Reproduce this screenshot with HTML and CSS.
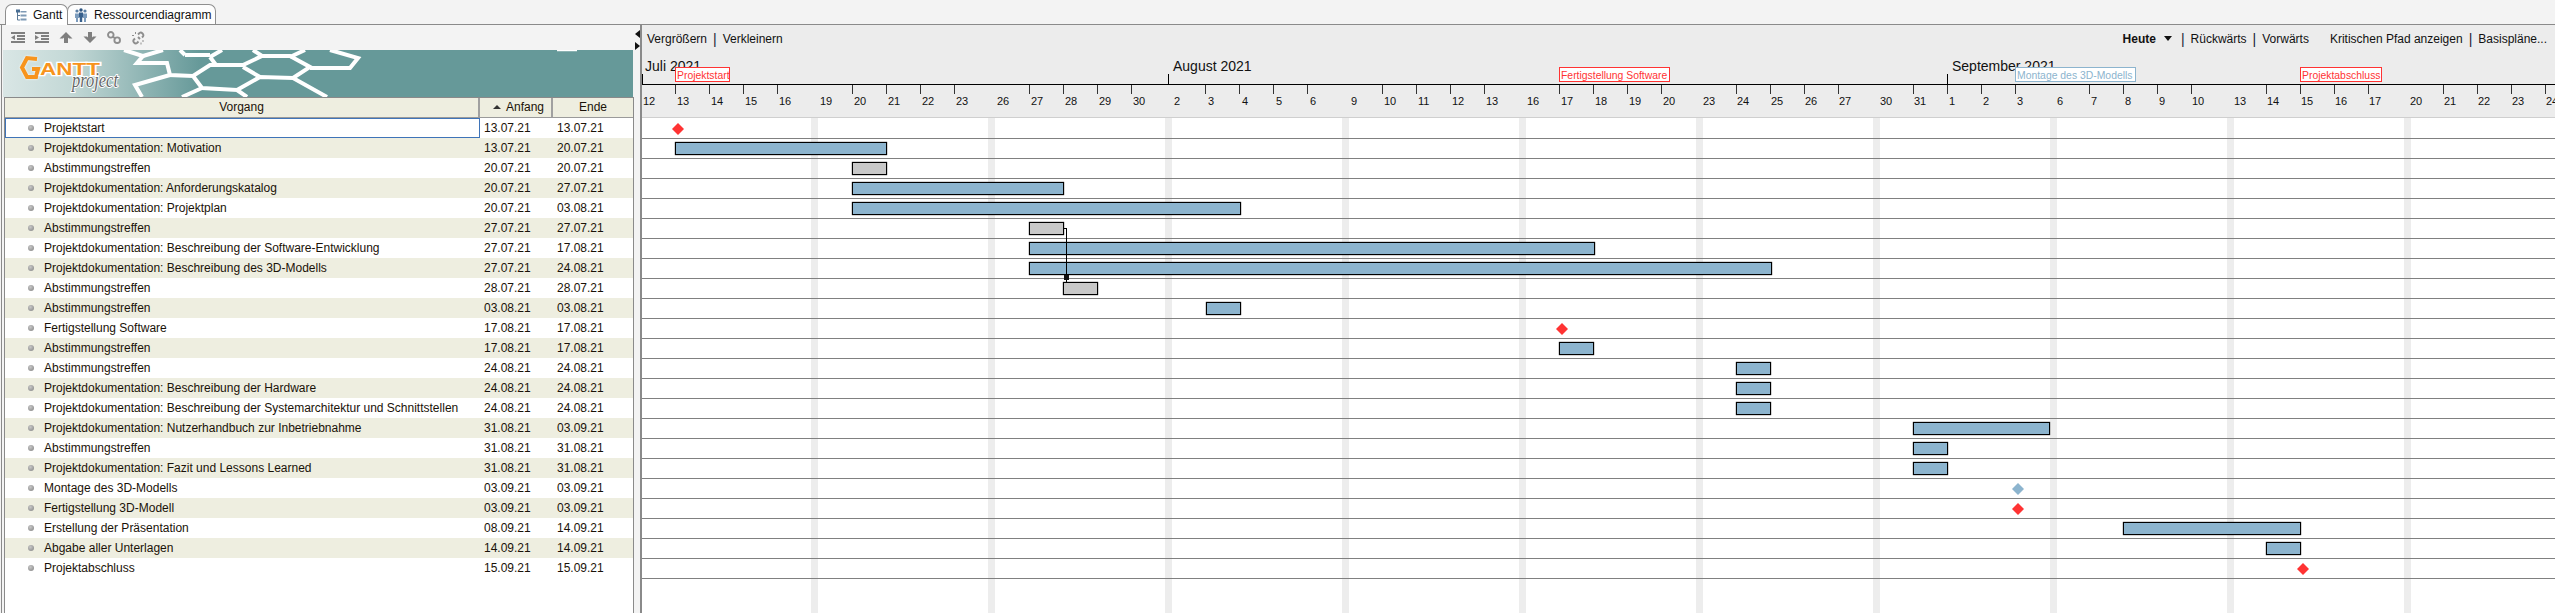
FILE: index.html
```html
<!DOCTYPE html>
<html lang="de">
<head>
    <meta charset="UTF-8">
    <title>GanttProject</title>
    <link rel="stylesheet" href="styles.css">
</head>
<body>
    <div class="tabs">
        <div class="tab tab-gantt">
            <svg class="tab-icon" width="12" height="12" viewBox="0 0 12 12">
                <path d="M2.5 3V11H5M2.5 6.5H5" fill="none" stroke="#5a7896"/>
                <rect x="1" y="0.5" width="4" height="3" fill="#4a6f94"/>
                <rect x="5.5" y="2" width="6" height="1.5" fill="#7f9ab5"/>
                <rect x="5.5" y="5.5" width="6" height="2" fill="#7f9ab5"/>
                <rect x="5.5" y="9.5" width="6" height="2" fill="#7f9ab5"/>
            </svg>
            <span>Gantt</span>
        </div>
        <div class="tab tab-res">
            <svg class="tab-icon" width="14" height="14" viewBox="0 0 14 14">
                <circle cx="3" cy="3" r="1.6" fill="#5a7fa6"/>
                <circle cx="11" cy="3" r="1.6" fill="#5a7fa6"/>
                <circle cx="7" cy="2" r="1.7" fill="#2f5580"/>
                <path d="M1 5.5H5V10H4V14H2V10H1ZM9 5.5H13V10H12V14H10V10H9Z" fill="#7c9cbd"/>
                <path d="M5 4.5H9V9.5H8.2V14H5.8V9.5H5Z" fill="#38608c"/>
            </svg>
            <span>Ressourcendiagramm</span>
        </div>
    </div>

    <div class="main">
        <div class="left-pane">
            <div class="icon-bar">
                <svg width="14" height="11" viewBox="0 0 14 11" class="tool-icon"><path d="M0 0H14V2H0ZM6 3H14V5H6ZM6 6H14V8H6ZM0 9H14V11H0ZM0 5.5L4 3V8Z"/></svg>
                <svg width="14" height="11" viewBox="0 0 14 11" class="tool-icon"><path d="M0 0H14V2H0ZM6 3H14V5H6ZM6 6H14V8H6ZM0 9H14V11H0ZM4 5.5L0 3V8Z"/></svg>
                <svg width="14" height="11" viewBox="0 0 14 11" class="tool-icon"><path d="M7 0L13.5 6.5H10L9 5.5V11H5V5.5L4 6.5H0.5Z"/></svg>
                <svg width="14" height="11" viewBox="0 0 14 11" class="tool-icon"><path d="M7 11L13.5 4.5H10L9 5.5V0H5V5.5L4 4.5H0.5Z"/></svg>
                <svg width="14" height="13" viewBox="0 0 14 13" class="tool-icon link-icon"><circle cx="3.8" cy="3.8" r="2.8"/><circle cx="10.2" cy="9.2" r="2.8"/><path d="M5.5 5.5L8.5 7.5"/></svg>
                <svg width="15" height="14" viewBox="0 0 15 14" class="tool-icon link-icon"><path d="M7 3.5L8.5 2Q10 1 11.5 2.5T12 5.5L11 6.5M4 7.5L3 8.5Q1.5 10 3 11.5T6 12L7.5 10.5M7 6L9 8"/><path class="link-spark" d="M4.5 1V3M1 4.5H3M11 10H13M10 11.5V13.5"/></svg>
            </div>

            <div class="banner">
                <svg width="630" height="47" viewBox="3 50 630 47">
                    <defs>
                        <linearGradient id="bannerFade" x1="3" y1="0" x2="200" y2="0" gradientUnits="userSpaceOnUse">
                            <stop offset="0" stop-color="#d9e6e5"/>
                            <stop offset="0.35" stop-color="#c3d8d6"/>
                            <stop offset="1" stop-color="#669999"/>
                        </linearGradient>
                    </defs>
                    <rect x="3" y="50" width="630" height="47" fill="url(#bannerFade)"/>
                    <g class="hex-lines">
                        <path d="M124 50L143 56L137 63H167L170 75L193 76L210 65H243L262 56H290L310 67L293 78L260 77L237 90L202 88L193 76"/>
                        <path d="M243 67L260 77M210 57L216 65M210 57L222 50M185 55H210M185 55L180 50M143 56L163 50M262 56L253 50M290 57L305 50"/>
                        <path d="M170 75L135 85L142 97M202 88L182 97M237 90L247 97M293 78L327 97"/>
                        <path d="M330 50L358 58L350 68H310"/>
                        <path class="hex-thin" d="M557 50.5H577"/>
                    </g>
                    <polyline class="logo-ring" points="37,59 27,58 22,67.5 27,77 36,77 38,69 32,69"/>
                    <text class="logo-word" x="40" y="75" textLength="60" lengthAdjust="spacingAndGlyphs">ANTT</text>
                    <text class="logo-sub" x="72" y="87" textLength="46" lengthAdjust="spacingAndGlyphs">project</text>
                </svg>
            </div>

            <div class="task-table">
                <div class="task-row task-head">
                    <div class="head-cell head-name">Vorgang</div>
                    <div class="head-cell head-date"><span class="sort-up"></span>Anfang</div>
                    <div class="head-cell">Ende</div>
                </div>
                <div class="task-row selected"><div class="name">Projektstart</div><div>13.07.21</div><div>13.07.21</div></div>
                <div class="task-row"><div class="name">Projektdokumentation: Motivation</div><div>13.07.21</div><div>20.07.21</div></div>
                <div class="task-row"><div class="name">Abstimmungstreffen</div><div>20.07.21</div><div>20.07.21</div></div>
                <div class="task-row"><div class="name">Projektdokumentation: Anforderungskatalog</div><div>20.07.21</div><div>27.07.21</div></div>
                <div class="task-row"><div class="name">Projektdokumentation: Projektplan</div><div>20.07.21</div><div>03.08.21</div></div>
                <div class="task-row"><div class="name">Abstimmungstreffen</div><div>27.07.21</div><div>27.07.21</div></div>
                <div class="task-row"><div class="name">Projektdokumentation: Beschreibung der Software-Entwicklung</div><div>27.07.21</div><div>17.08.21</div></div>
                <div class="task-row"><div class="name">Projektdokumentation: Beschreibung des 3D-Modells</div><div>27.07.21</div><div>24.08.21</div></div>
                <div class="task-row"><div class="name">Abstimmungstreffen</div><div>28.07.21</div><div>28.07.21</div></div>
                <div class="task-row"><div class="name">Abstimmungstreffen</div><div>03.08.21</div><div>03.08.21</div></div>
                <div class="task-row"><div class="name">Fertigstellung Software</div><div>17.08.21</div><div>17.08.21</div></div>
                <div class="task-row"><div class="name">Abstimmungstreffen</div><div>17.08.21</div><div>17.08.21</div></div>
                <div class="task-row"><div class="name">Abstimmungstreffen</div><div>24.08.21</div><div>24.08.21</div></div>
                <div class="task-row"><div class="name">Projektdokumentation: Beschreibung der Hardware</div><div>24.08.21</div><div>24.08.21</div></div>
                <div class="task-row"><div class="name">Projektdokumentation: Beschreibung der Systemarchitektur und Schnittstellen</div><div>24.08.21</div><div>24.08.21</div></div>
                <div class="task-row"><div class="name">Projektdokumentation: Nutzerhandbuch zur Inbetriebnahme</div><div>31.08.21</div><div>03.09.21</div></div>
                <div class="task-row"><div class="name">Abstimmungstreffen</div><div>31.08.21</div><div>31.08.21</div></div>
                <div class="task-row"><div class="name">Projektdokumentation: Fazit und Lessons Learned</div><div>31.08.21</div><div>31.08.21</div></div>
                <div class="task-row"><div class="name">Montage des 3D-Modells</div><div>03.09.21</div><div>03.09.21</div></div>
                <div class="task-row"><div class="name">Fertigstellung 3D-Modell</div><div>03.09.21</div><div>03.09.21</div></div>
                <div class="task-row"><div class="name">Erstellung der Präsentation</div><div>08.09.21</div><div>14.09.21</div></div>
                <div class="task-row"><div class="name">Abgabe aller Unterlagen</div><div>14.09.21</div><div>14.09.21</div></div>
                <div class="task-row"><div class="name">Projektabschluss</div><div>15.09.21</div><div>15.09.21</div></div>
            </div>
        </div>

        <div class="splitter">
            <span class="arrow-left"></span>
            <span class="arrow-right"></span>
        </div>

        <div class="right-pane">
            <div class="chart-head">
                <div class="chart-tools">
                    <div class="tool-group">
                        <span>Vergrößern</span><span class="sep">|</span><span>Verkleinern</span>
                    </div>
                    <div class="tool-group">
                        <b>Heute</b><span class="drop"></span><span class="sep">|</span><span>Rückwärts</span><span class="sep">|</span><span>Vorwärts</span>
                        <span class="tool-gap">Kritischen Pfad anzeigen</span><span class="sep">|</span><span>Basispläne...</span>
                    </div>
                </div>
                <svg class="timeline" width="1913" height="67" viewBox="642 50 1913 67">
                    <path class="axis" d="M642 84.5H2555M642.5 74V84M1168.5 74V84M1947.5 74V84"/>
                    <path class="tick" d="M675.5 85V94M709.5 85V94M743.5 85V94M777.5 85V94M852.5 85V94M886.5 85V94M920.5 85V94M954.5 85V94M1029.5 85V94M1063.5 85V94M1097.5 85V94M1131.5 85V94M1205.5 85V94M1239.5 85V94M1273.5 85V94M1307.5 85V94M1382.5 85V94M1416.5 85V94M1450.5 85V94M1484.5 85V94M1559.5 85V94M1593.5 85V94M1627.5 85V94M1661.5 85V94M1736.5 85V94M1770.5 85V94M1804.5 85V94M1838.5 85V94M1913.5 85V94M1947.5 85V94M1981.5 85V94M2015.5 85V94M2089.5 85V94M2123.5 85V94M2157.5 85V94M2191.5 85V94M2266.5 85V94M2300.5 85V94M2334.5 85V94M2368.5 85V94M2443.5 85V94M2477.5 85V94M2511.5 85V94M2545.5 85V94"/>

                    <text class="month" x="645" y="70.5">Juli 2021</text>
                    <text class="month" x="1173" y="70.5">August 2021</text>
                    <text class="month" x="1952" y="70.5">September 2021</text>

                    <text class="day" x="643" y="104.5">12</text><text class="day" x="677" y="104.5">13</text><text class="day" x="711" y="104.5">14</text><text class="day" x="745" y="104.5">15</text><text class="day" x="779" y="104.5">16</text>
                    <text class="day" x="820" y="104.5">19</text><text class="day" x="854" y="104.5">20</text><text class="day" x="888" y="104.5">21</text><text class="day" x="922" y="104.5">22</text><text class="day" x="956" y="104.5">23</text>
                    <text class="day" x="997" y="104.5">26</text><text class="day" x="1031" y="104.5">27</text><text class="day" x="1065" y="104.5">28</text><text class="day" x="1099" y="104.5">29</text><text class="day" x="1133" y="104.5">30</text>
                    <text class="day" x="1174" y="104.5">2</text><text class="day" x="1208" y="104.5">3</text><text class="day" x="1242" y="104.5">4</text><text class="day" x="1276" y="104.5">5</text><text class="day" x="1310" y="104.5">6</text>
                    <text class="day" x="1351" y="104.5">9</text><text class="day" x="1384" y="104.5">10</text><text class="day" x="1418" y="104.5">11</text><text class="day" x="1452" y="104.5">12</text><text class="day" x="1486" y="104.5">13</text>
                    <text class="day" x="1527" y="104.5">16</text><text class="day" x="1561" y="104.5">17</text><text class="day" x="1595" y="104.5">18</text><text class="day" x="1629" y="104.5">19</text><text class="day" x="1663" y="104.5">20</text>
                    <text class="day" x="1703" y="104.5">23</text><text class="day" x="1737" y="104.5">24</text><text class="day" x="1771" y="104.5">25</text><text class="day" x="1805" y="104.5">26</text><text class="day" x="1839" y="104.5">27</text>
                    <text class="day" x="1880" y="104.5">30</text><text class="day" x="1914" y="104.5">31</text><text class="day" x="1949" y="104.5">1</text><text class="day" x="1983" y="104.5">2</text><text class="day" x="2017" y="104.5">3</text>
                    <text class="day" x="2057" y="104.5">6</text><text class="day" x="2091" y="104.5">7</text><text class="day" x="2125" y="104.5">8</text><text class="day" x="2159" y="104.5">9</text><text class="day" x="2192" y="104.5">10</text>
                    <text class="day" x="2234" y="104.5">13</text><text class="day" x="2267" y="104.5">14</text><text class="day" x="2301" y="104.5">15</text><text class="day" x="2335" y="104.5">16</text><text class="day" x="2369" y="104.5">17</text>
                    <text class="day" x="2410" y="104.5">20</text><text class="day" x="2444" y="104.5">21</text><text class="day" x="2478" y="104.5">22</text><text class="day" x="2512" y="104.5">23</text><text class="day" x="2546" y="104.5">24</text>

                    <g class="flag-red">
                        <rect x="675.5" y="67.5" width="54" height="14"/><text x="677" y="78.5">Projektstart</text>
                        <rect x="1559.5" y="67.5" width="110" height="14"/><text x="1561" y="78.5">Fertigstellung Software</text>
                        <rect x="2300.5" y="67.5" width="81" height="14"/><text x="2302" y="78.5">Projektabschluss</text>
                    </g>
                    <g class="flag-blue">
                        <rect x="2015.5" y="67.5" width="120" height="14"/><text x="2017" y="78.5">Montage des 3D-Modells</text>
                    </g>
                </svg>
            </div>

            <div class="chart-body">
                <div class="chart-row"><span class="diamond" style="left:30px"></span></div>
                <div class="chart-row"><span class="bar" style="left:33px;width:212px"></span></div>
                <div class="chart-row"><span class="bar bar-meet" style="left:210px;width:35px"></span></div>
                <div class="chart-row"><span class="bar" style="left:210px;width:212px"></span></div>
                <div class="chart-row"><span class="bar" style="left:210px;width:389px"></span></div>
                <div class="chart-row"><span class="bar bar-meet" style="left:387px;width:35px"></span></div>
                <div class="chart-row"><span class="bar" style="left:387px;width:566px"></span></div>
                <div class="chart-row"><span class="bar" style="left:387px;width:743px"></span></div>
                <div class="chart-row"><span class="bar bar-meet" style="left:421px;width:35px"></span></div>
                <div class="chart-row"><span class="bar" style="left:564px;width:35px"></span></div>
                <div class="chart-row"><span class="diamond" style="left:914px"></span></div>
                <div class="chart-row"><span class="bar" style="left:917px;width:35px"></span></div>
                <div class="chart-row"><span class="bar" style="left:1094px;width:35px"></span></div>
                <div class="chart-row"><span class="bar" style="left:1094px;width:35px"></span></div>
                <div class="chart-row"><span class="bar" style="left:1094px;width:35px"></span></div>
                <div class="chart-row"><span class="bar" style="left:1271px;width:137px"></span></div>
                <div class="chart-row"><span class="bar" style="left:1271px;width:35px"></span></div>
                <div class="chart-row"><span class="bar" style="left:1271px;width:35px"></span></div>
                <div class="chart-row"><span class="diamond diamond-blue" style="left:1370px"></span></div>
                <div class="chart-row"><span class="diamond" style="left:1370px"></span></div>
                <div class="chart-row"><span class="bar" style="left:1481px;width:178px"></span></div>
                <div class="chart-row"><span class="bar" style="left:1624px;width:35px"></span></div>
                <div class="chart-row"><span class="diamond" style="left:1655px"></span></div>
                <span class="link-line"></span>
                <span class="link-head"></span>
            </div>
        </div>
    </div>
</body>
</html>
```

FILE: styles.css
```css
* {
    box-sizing: border-box;
}

html, body {
    height: 100%;
}

body {
    margin: 0;
    background-color: #f3f3f3;
    color: #111;
    font-family: "Liberation Sans", Arial, sans-serif;
    font-size: 12px;
    display: flex;
    flex-direction: column;
    overflow: hidden;
}

/* tabs */
.tabs {
    height: 25px;
    display: flex;
    padding: 4px 0 0 5px;
    border-bottom: 1px solid #8a8a8a;
    flex: none;
}
.tab {
    height: 20px;
    display: flex;
    align-items: center;
    gap: 6px;
    background-color: #fff;
    border: 1px solid #8f8f8f;
    border-bottom: none;
    border-radius: 7px 7px 0 0;
}
.tab-gantt {
    width: 63px;
    padding-left: 9px;
    position: relative;
    z-index: 1;
    height: 21px;
}
.tab-res {
    width: 149px;
    margin-left: -1px;
    padding-left: 6px;
    background-color: #fdfdfd;
}
.tab-icon {
    flex: none;
}

.main {
    flex: 1;
    display: flex;
    min-height: 0;
}

/* left side */
.left-pane {
    width: 634px;
    display: flex;
    flex-direction: column;
    border-left: 1px solid #8a8a8a;
    margin-left: 1px;
    padding-left: 1px;
    flex: none;
}
.icon-bar {
    height: 25px;
    display: flex;
    align-items: center;
    gap: 10px;
    padding-left: 8px;
    flex: none;
}
.tool-icon {
    fill: #7f7f7f;
    flex: none;
}
.link-icon {
    fill: none;
    stroke: #8e8e8e;
    stroke-width: 1.9;
}
.link-spark {
    stroke-width: 1;
}
.banner {
    height: 47px;
    line-height: 0;
    flex: none;
}
.hex-lines path {
    fill: none;
    stroke: #fff;
    stroke-width: 4;
}
.hex-lines .hex-thin {
    stroke-width: 1.5;
}
.logo-ring {
    fill: none;
    stroke: #f7941d;
    stroke-width: 4;
    filter: drop-shadow(0 0 1px #fff);
}
.logo-word {
    font-family: "Liberation Sans", sans-serif;
    font-weight: bold;
    font-size: 17px;
    fill: #f7941d;
    stroke: #fff;
    stroke-width: 2.5px;
    paint-order: stroke;
}
.logo-sub {
    font-family: "Liberation Serif", serif;
    font-style: italic;
    font-size: 20px;
    fill: #666;
    stroke: #fff;
    stroke-width: 2px;
    paint-order: stroke;
}

.task-table {
    flex: 1;
    width: 630px;
    margin-left: 1px;
    background-color: #fff;
    border-left: 1px solid #8a8a8a;
    border-right: 1px solid #8a8a8a;
}
.task-row {
    height: 20px;
    display: grid;
    grid-template-columns: 475px 73px 1fr;
    align-items: center;
    line-height: 20px;
    color: #1a1208;
}
.task-row > div {
    padding-left: 4px;
}
.task-row:nth-child(odd) {
    background-color: #eeeee0;
}
.task-row .name {
    padding-left: 39px;
    position: relative;
}
.task-row .name::before {
    content: "";
    position: absolute;
    left: 23px;
    top: 7px;
    width: 6px;
    height: 6px;
    border-radius: 50%;
    background: radial-gradient(circle at 40% 35%, #c8c8c8, #808080);
}
.task-row.selected .name {
    outline: 1px solid #3f74b8;
    outline-offset: -1px;
}
.task-head {
    height: 21px;
    background-color: #f3f3f3;
    border-top: 1px solid #8a8a8a;
    border-bottom: 1px solid #9a9a9a;
}
.task-table .head-cell {
    height: 19px;
    padding: 0;
    text-align: center;
    line-height: 19px;
    border-right: 2px solid #a0a0a0;
    position: relative;
}
.task-table .head-cell:last-child {
    border-right: none;
}
.task-table .head-date {
    padding-left: 26px;
    text-align: left;
}
.sort-up {
    position: absolute;
    left: 13px;
    top: 7px;
    border-left: 4px solid transparent;
    border-right: 4px solid transparent;
    border-bottom: 4px solid #333;
}

/* splitter */
.splitter {
    width: 5px;
    flex: none;
    display: flex;
    flex-direction: column;
    gap: 4px;
    padding-top: 5px;
}
.arrow-left, .arrow-right {
    width: 0;
    height: 0;
    border-top: 4px solid transparent;
    border-bottom: 4px solid transparent;
}
.arrow-left {
    border-right: 5px solid #111;
}
.arrow-right {
    border-left: 5px solid #111;
}

/* chart side */
.right-pane {
    flex: 1;
    min-width: 0;
    display: flex;
    flex-direction: column;
    border-left: 2px solid #8a8a8a;
    background-color: #fff;
}
.chart-head {
    height: 93px;
    background-color: #ececec;
    border-bottom: 1px solid #cfcfcf;
    flex: none;
    display: flex;
    flex-direction: column;
}
.chart-tools {
    height: 25px;
    display: flex;
    justify-content: space-between;
    align-items: center;
    padding: 2px 8px 0 5px;
    flex: none;
}
.tool-group {
    display: flex;
    align-items: center;
    gap: 5px;
}
.sep {
    color: #223;
    font-size: 14px;
    padding: 0 1px;
}
.tool-gap {
    margin-left: 16px;
}
.drop {
    margin-left: 3px;
    border-left: 4px solid transparent;
    border-right: 4px solid transparent;
    border-top: 5px solid #111;
    margin-right: 3px;
}
.timeline {
    flex: none;
    display: block;
}
.axis {
    fill: none;
    stroke: #000;
}
.tick {
    fill: none;
    stroke: #333;
}
.month {
    font-size: 14px;
    fill: #111;
}
.day {
    font-size: 11px;
    fill: #111;
}
.flag-red rect, .flag-blue rect {
    fill: #fff;
}
.flag-red rect {
    stroke: #ff3333;
}
.flag-blue rect {
    stroke: #8cb4ce;
}
.flag-red text, .flag-blue text {
    font-size: 10.4px;
}
.flag-red text {
    fill: #ff3333;
}
.flag-blue text {
    fill: #8cb4ce;
}

.chart-body {
    flex: 1;
    position: relative;
    padding-top: 1px;
    background-image: repeating-linear-gradient(90deg, transparent 0, transparent 169px, #ededed 169px, #ededed 176px, transparent 176px, transparent 177px);
}
.chart-row {
    height: 20px;
    position: relative;
    border-bottom: 1px solid #808080;
}
.bar {
    position: absolute;
    top: 3px;
    height: 13px;
    background-color: #8cb4ce;
    border: 1px solid #000;
    box-shadow: 0 0 1px #000;
}
.bar-meet {
    background-color: #c8c8c8;
}
.diamond {
    position: absolute;
    top: 4px;
    width: 12px;
    height: 12px;
    background-color: #ff3333;
    clip-path: polygon(50% 0, 100% 50%, 50% 100%, 0 50%);
}
.diamond-blue {
    background-color: #8cb4ce;
}
.link-line {
    position: absolute;
    left: 421px;
    top: 110px;
    width: 4px;
    height: 54px;
    border-top: 1px solid #000;
    border-right: 1px solid #000;
}
.link-head {
    position: absolute;
    left: 422px;
    top: 157px;
    width: 5px;
    height: 5px;
    background-color: #111;
}
```
